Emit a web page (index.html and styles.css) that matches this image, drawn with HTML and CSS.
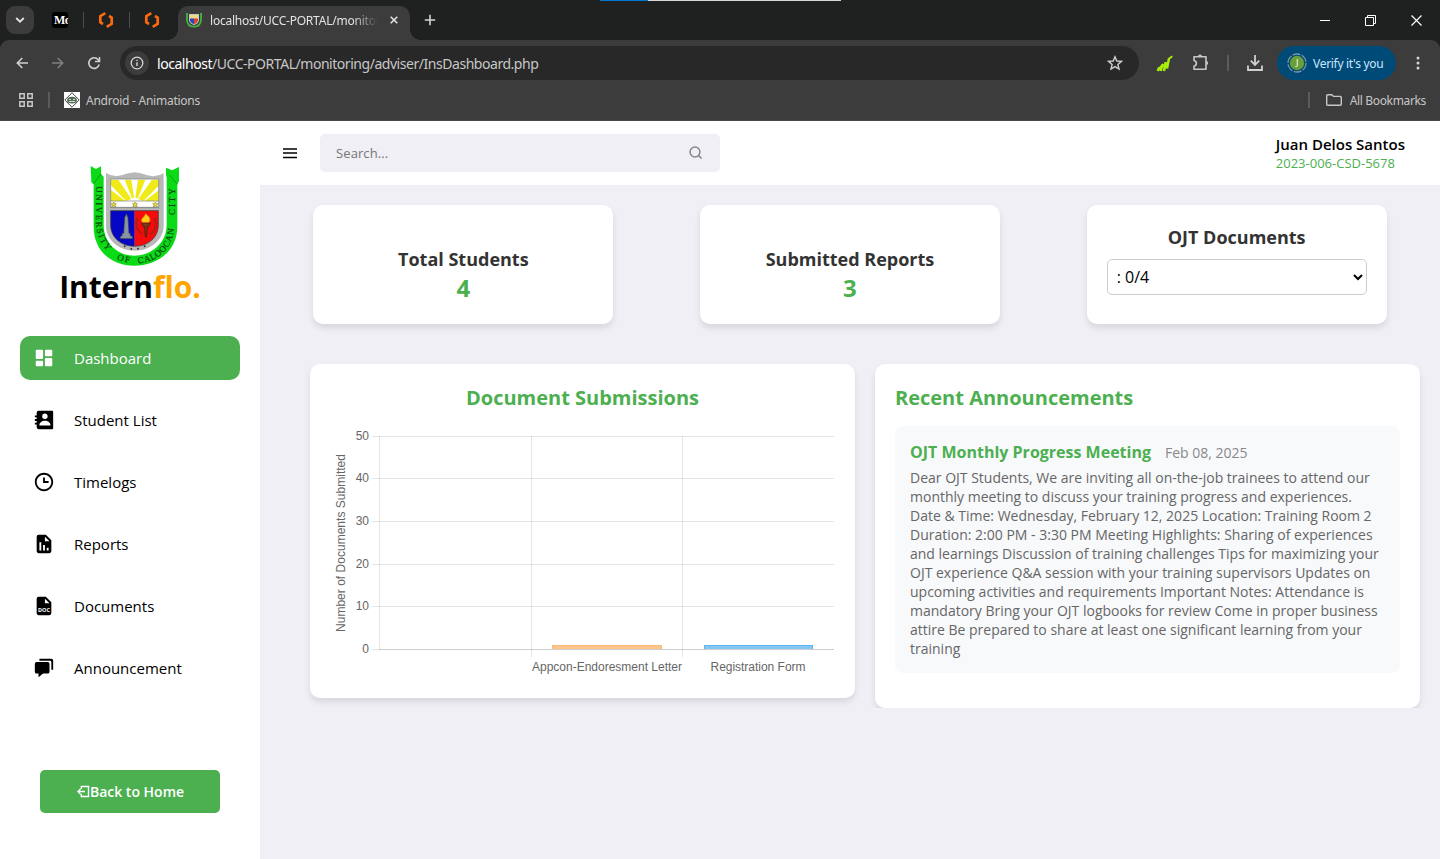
FILE: index.html
```html
<!DOCTYPE html>
<html lang="en">
<head>
<meta charset="utf-8">
<title>Internflo Dashboard</title>
<link rel="stylesheet" href="styles.css">
</head>
<body>
<header class="browser">
  <div class="tabstrip">
    <button class="tab-search"><svg width="10" height="8" viewBox="0 0 10 8"><path d="M1.2 2l3.8 3.7L8.800 2" fill="none" stroke="#e3e3e3" stroke-width="1.8"/></svg></button>
    <span class="fav-m">Mo</span>
    <i class="tab-sep"></i>
    <svg class="fav-hex" width="16" height="18" viewBox="0 0 16 18"><path d="M7.300 2.200L2.300 5.200V11.300L5 13M8.700 15.800L13.700 12.800V6.700L11 5" fill="none" stroke="#fb6a10" stroke-width="2.700"/></svg>
    <i class="tab-sep"></i>
    <svg class="fav-hex" width="16" height="18" viewBox="0 0 16 18"><path d="M7.300 2.200L2.300 5.200V11.300L5 13M8.700 15.800L13.700 12.800V6.700L11 5" fill="none" stroke="#fb6a10" stroke-width="2.700"/></svg>
    <div class="tab">
      <svg width="16" height="16" viewBox="0 0 16 16"><path d="M1 1V8Q1.500 14.500 8 14.700Q14.500 14.500 15 8V1" fill="none" stroke="#45b53c" stroke-width="1.800"/><path d="M3 2H13V8Q12.500 12 8 13Q3.500 12 3 8Z" fill="#c9c9c9"/><path d="M4 3H12V6.500H4Z" fill="#eedb83"/><path d="M4 6.500H8V12Q4.300 11 4 8Z" fill="#2947b8"/><path d="M8 6.500H12V8Q11.700 11 8 12Z" fill="#d74632"/></svg>
      <span class="tab-title">localhost/UCC-PORTAL/monitoring</span>
      <svg class="tab-close" width="8" height="8" viewBox="0 0 8 8"><path d="M.7.7l6.600 6.600M7.300.7L.7 7.300" stroke="#e3e3e3" stroke-width="1.600"/></svg>
    </div>
    <svg class="newtab" width="12" height="12" viewBox="0 0 12 12"><path d="M6 .8V11.200M.8 6H11.200" stroke="#d4d4d4" stroke-width="1.600"/></svg>
    <div class="win">
      <svg width="10" height="11" viewBox="0 0 10 11"><path d="M0 5.500H10" stroke="#fff"/></svg>
      <svg width="11" height="11" viewBox="0 0 11 11" fill="none" stroke="#fff"><path d="M.5 2.500H8.500V10.500H.5zM2.500 2.500V.5H10.500V8.500H8.500"/></svg>
      <svg width="11" height="11" viewBox="0 0 11 11"><path d="M.5.5l10 10M10.500.5l-10 10" stroke="#fff" stroke-width="1.200"/></svg>
    </div>
    <i class="loadbar"></i>
  </div>
  <div class="toolbar">
    <svg class="nav-back" width="12" height="12" viewBox="0 0 12 12"><path d="M12 6H1.500M6.300 1L1.300 6l5 5" fill="none" stroke="#d0d0d0" stroke-width="1.600"/></svg>
    <svg class="nav-fwd" width="12" height="12" viewBox="0 0 12 12"><path d="M0 6H10.500M5.700 1l5 5-5 5" fill="none" stroke="#808080" stroke-width="1.600"/></svg>
    <svg class="nav-reload" width="14" height="14" viewBox="0 0 14 14"><path d="M12.200 8.500A5.300 5.300 0 1 1 11.200 3.700L12.300 5" fill="none" stroke="#d0d0d0" stroke-width="1.600"/><path d="M12.500 1V5.500H8" fill="none" stroke="#d0d0d0" stroke-width="1.600"/></svg>
    <div class="omnibox">
      <span class="info"><svg width="14" height="14" viewBox="0 0 14 14"><circle cx="7" cy="7" r="5.800" fill="none" stroke="#d5d5d5" stroke-width="1.300"/><path d="M7 6.300V10M7 3.700V5.100" stroke="#d5d5d5" stroke-width="1.400"/></svg></span>
      <span class="url"><b>localhost</b>/UCC-PORTAL/monitoring/adviser/InsDashboard.php</span>
      <svg class="star" width="16" height="16" viewBox="0 0 16 16"><path d="M8 1.800L9.800 6l4.700.4-3.600 3.100 1.100 4.500L8 11.600 4 14l1.100-4.500L1.500 6.400 6.200 6z" fill="none" stroke="#d0d0d0" stroke-width="1.400"/></svg>
    </div>
    <svg class="ext-green" width="17" height="17" viewBox="0 0 17 17"><path d="M1.700 16L3.200 12.500M4.700 16L6.500 9.500M8 16L9.800 7M11 13.500L13 3.500" fill="none" stroke="#a7ee0a" stroke-width="2.500"/><path d="M3 13.500L7.500 9M7 12L10.500 7.500M12.500 4L16.300 1.200" stroke="#a7ee0a" stroke-width="1.800"/></svg>
    <svg class="puzzle" width="18" height="18" viewBox="0 0 18 18"><path d="M2 2.800H14V15.200H2V12.200C5.200 11.500 5.200 7.200 2 6.500Z" fill="none" stroke="#c8c8c8" stroke-width="1.600" stroke-linejoin="round"/><path d="M6 2.500a2 1.900 0 0 1 4 0zM14.300 7a1.900 2 0 0 1 0 4z" fill="#c8c8c8"/></svg>
    <i class="tool-sep"></i>
    <svg class="download" width="16" height="16" viewBox="0 0 16 16"><path d="M8 0V9.500M3.800 5.700L8 9.900l4.200-4.200M1 10.500V15H15V10.500" fill="none" stroke="#d0d0d0" stroke-width="1.800"/></svg>
    <button class="verify"><svg width="20" height="20" viewBox="0 0 20 20"><circle cx="10" cy="10" r="9" fill="none" stroke="#7694a9" stroke-width="1.300" stroke-dasharray="8 1.400"/><circle cx="10" cy="10" r="7.200" fill="#689f38"/><text class="avatar-letter" x="10" y="13.200" text-anchor="middle">J</text></svg><span>Verify it's you</span></button>
    <svg class="kebab" width="4" height="14" viewBox="0 0 4 14" fill="#d5d5d5"><circle cx="2" cy="2" r="1.500"/><circle cx="2" cy="7" r="1.500"/><circle cx="2" cy="12" r="1.500"/></svg>
  </div>
  <div class="bookmarks">
    <svg width="14" height="14" viewBox="0 0 14 14" fill="none" stroke="#c7c7c7" stroke-width="1.500"><path d="M.8.8H5.200V5.200H.8zM8.800.8H13.200V5.200H8.800zM.8 8.800H5.200V13.200H.8zM8.800 8.800H13.200V13.200H8.800z"/></svg>
    <i class="bm-sep"></i>
    <svg class="bm-icon" width="16" height="16" viewBox="0 0 16 16"><path d="M0 0H16V16H0z" fill="#fff"/><path d="M8 .8L15.200 8 8 15.200.8 8z" fill="none" stroke="#444"/><path d="M3 9Q3 4.800 8 4.800T13 9Q12 11.500 8 11.500T3 9z" fill="#55685a"/><path d="M5 7.500H7M9 7.500H11M5 9.500H11" stroke="#c5e8cd"/></svg>
    <span class="bm-name">Android - Animations</span>
    <div class="bm-all"><i class="bm-sep"></i><svg width="16" height="12" viewBox="0 0 16 12"><path d="M.7 1.700Q.7.700 1.700.7H5.800L7.500 2.400H14.300Q15.300 2.400 15.300 3.400V10.300Q15.300 11.300 14.300 11.300H1.700Q.7 11.300.7 10.300Z" fill="none" stroke="#c7c7c7" stroke-width="1.400"/></svg><span>All Bookmarks</span></div>
  </div>
</header>

<div class="app">
  <aside class="sidebar">
    <svg class="crest" width="90" height="104" viewBox="120 30 270 312">
      <path d="M122 33L138 42 153 34V56L161 65V210C161 265 203 302 253 302S350 265 350 210V68L348 60V38L366 46 387 36V79L382 88V215C382 288 321 332 253 332S131 288 131 215V88L124 82Z" fill="#0bdb17"/>
      <path d="M131 86L153 56M382 88L358 60" stroke="#087d10" stroke-width="2"/>
      <path d="M168 54Q190 68 214 61Q236 54 254 52Q272 54 292 61Q318 68 341 55V212C341 254 302 287 254 287S168 254 168 212Z" fill="#b8b8b8"/>
      <path d="M182 72H326V158H182Z" fill="#fff"/>
      <path d="M182 74H205L244 132 228 138 182 90ZM224 74H244L252 128 246 130ZM264 74H286L264 130 256 128ZM306 74H326V92L280 138 265 132ZM182 104L226 138H182ZM326 106V138H284Z" fill="#f0ea18"/>
      <path d="M182 138H326M182 157H326M182 72H326V158H182Z" fill="none" stroke="#777" stroke-width="2"/>
      <g fill="#e8dc30" stroke="#77751e" stroke-width="1.500"><path id="crest-star" d="M191 141l3 5h5l-4 4 2 6-6-3-6 3 2-6-4-4h5z"/><use href="#crest-star" x="64"/><use href="#crest-star" x="125"/></g>
      <path d="M182 167H254V274C211 273 182 246 182 211Z" fill="#0507c5"/>
      <path d="M254 167H325V211C325 246 296 273 254 274Z" fill="#f50b0b"/>
      <path d="M182 167H325V211C325 246 296 274 254 274S182 246 182 211Z" fill="none" stroke="#333" stroke-width="2"/>
      <path d="M229 176L224 188 221 235H216V243H211V251H247V243H241V235H237L234 188Z" fill="#8795a3" stroke="#35404a" stroke-width="2"/>
      <path d="M262 190Q252 218 276 237M314 190Q325 218 302 237" fill="none" stroke="#7a2c16" stroke-width="6" stroke-dasharray="4 3"/>
      <path d="M275 204H301L296 215H292L290 246H286L284 215H280Z" fill="#7d3a16" stroke="#391b0c" stroke-width="2"/>
      <path d="M277 202C268 190 286 187 286 176C298 184 304 192 297 202Z" fill="#ffcf16" stroke="#e07a0c" stroke-width="2"/>
      <g fill="#333"><circle cx="224" cy="274" r="3"/><circle cx="244" cy="282" r="3"/><circle cx="264" cy="281" r="3"/><circle cx="284" cy="274" r="3"/></g>
      <path id="arc-a" d="M138 94V205Q140 251 173 290" fill="none"/>
      <path id="arc-b" d="M200 312Q218 322 246 324" fill="none"/>
      <path id="arc-c" d="M264 325C325 321 372 280 373 208" fill="none"/>
      <path id="arc-d" d="M374 180V98" fill="none"/>
      <g class="crest-text">
        <text><textPath href="#arc-a" textLength="202">UNIVERSITY</textPath></text>
        <text><textPath href="#arc-b" textLength="40">OF</textPath></text>
        <text><textPath href="#arc-c" textLength="164">CALOOCAN</textPath></text>
        <text><textPath href="#arc-d" textLength="80">CITY</textPath></text>
      </g>
    </svg>
    <div class="brand">Intern<span>flo.</span></div>
    <nav class="menu">
      <a class="item active"><svg viewBox="0 0 24 24"><path d="M4 13h6a1 1 0 0 0 1-1V4a1 1 0 0 0-1-1H4a1 1 0 0 0-1 1v8a1 1 0 0 0 1 1zm-1 7a1 1 0 0 0 1 1h6a1 1 0 0 0 1-1v-4a1 1 0 0 0-1-1H4a1 1 0 0 0-1 1v4zm10 0a1 1 0 0 0 1 1h6a1 1 0 0 0 1-1v-7a1 1 0 0 0-1-1h-6a1 1 0 0 0-1 1v7zm1-10h6a1 1 0 0 0 1-1V4a1 1 0 0 0-1-1h-6a1 1 0 0 0-1 1v5a1 1 0 0 0 1 1z"/></svg><span>Dashboard</span></a>
      <a class="item"><svg viewBox="0 0 24 24"><path d="M21 2H6a2 2 0 0 0-2 2v3H2v2h2v2H2v2h2v2H2v2h2v3a2 2 0 0 0 2 2h15a1 1 0 0 0 1-1V3a1 1 0 0 0-1-1zm-8 3c1.650 0 3 1.350 3 3a3 3 0 0 1-6 0c0-1.650 1.350-3 3-3zM19 18H7v-.750c0-2.220 2.700-4.500 6-4.500s6 2.280 6 4.500V18z"/></svg><span>Student List</span></a>
      <a class="item"><svg viewBox="0 0 24 24"><path d="M12 2C6.490 2 2 6.490 2 12s4.490 10 10 10 10-4.490 10-10S17.510 2 12 2zm0 18c-4.410 0-8-3.590-8-8s3.590-8 8-8 8 3.590 8 8-3.590 8-8 8z"/><path d="M13 7h-2v6h6v-2h-4z"/></svg><span>Timelogs</span></a>
      <a class="item"><svg viewBox="0 0 24 24"><path fill-rule="evenodd" d="M14 2H6a2 2 0 0 0-2 2v16a2 2 0 0 0 2 2h12a2 2 0 0 0 2-2V8zM9 19H7v-9h2zm4 0h-2v-6h2zm4 0h-2v-3h2zM13 9V4l5 5z"/></svg><span>Reports</span></a>
      <a class="item"><svg viewBox="0 0 24 24"><path fill-rule="evenodd" d="M14 2H6a2 2 0 0 0-2 2v16a2 2 0 0 0 2 2h12a2 2 0 0 0 2-2V8zM13 9V4l5 5z"/><text class="doc-label" x="12" y="18.200" text-anchor="middle" textLength="13" lengthAdjust="spacingAndGlyphs">DOC</text></svg><span>Documents</span></a>
      <a class="item"><svg viewBox="0 0 24 24"><path d="M20 2H7V4H18.500Q20 4 20 5.500V14H22V4a2 2 0 0 0-2-2z"/><path d="M16 5.500H4a2 2 0 0 0-2 2V16a2 2 0 0 0 2 2H6v4l5-4h5a2 2 0 0 0 2-2V7.500a2 2 0 0 0-2-2z"/></svg><span>Announcement</span></a>
    </nav>
    <a class="home"><svg width="13" height="13" viewBox="0 0 13 13"><path d="M4.300 4V1.500H11.500V11.500H4.300V9M1 6.500H8M3.500 3.900L.9 6.500 3.500 9.100" fill="none" stroke="#fff" stroke-width="1.400"/></svg>Back to Home</a>
  </aside>

  <main class="main">
    <div class="topbar">
      <svg class="burger" width="14" height="12" viewBox="0 0 14 12"><path d="M0 2H14M0 6H14M0 10.500H14" stroke="#000" stroke-width="1.600"/></svg>
      <div class="search"><span>Search...</span><svg width="14" height="14" viewBox="0 0 14 14"><path d="M9.500 9.500L12.500 12.500" stroke="#888" stroke-width="1.700"/><circle cx="6" cy="6" r="4.900" fill="none" stroke="#888" stroke-width="1.500"/></svg></div>
      <div class="user"><div class="user-name">Juan Delos Santos</div><div class="user-id">2023-006-CSD-5678</div></div>
    </div>

    <div class="stats">
      <div class="stat"><h3>Total Students</h3><p>4</p></div>
      <div class="stat"><h3>Submitted Reports</h3><p>3</p></div>
      <div class="stat stat-docs"><h3>OJT Documents</h3><select><option>: 0/4</option></select></div>
    </div>

    <div class="panels">
      <section class="panel chart-panel">
        <h2>Document Submissions</h2>
        <svg class="chart" width="505" height="252" viewBox="330 426 505 252">
          <path d="M372 436.500H834M372 478.500H834M372 521.500H834M372 564.500H834M372 606.500H834M372 649.500H834M379.500 436V650M531.500 436V657M682.500 436V657" stroke="#000" stroke-opacity=".1"/>
          <path d="M379 649.500H834" stroke="#000" stroke-opacity=".1"/>
          <path d="M552 645H662V649H552Z" fill="#ffc58c"/><path d="M552.500 649V645.500H661.500V649" fill="none" stroke="#fbb977"/>
          <path d="M704 645H813V649H704Z" fill="#86c7f3"/><path d="M704.500 649V645.500H812.500V649" fill="none" stroke="#5eb5ef"/>
          <g class="tick" text-anchor="end"><text x="369" y="440">50</text><text x="369" y="482">40</text><text x="369" y="525">30</text><text x="369" y="568">20</text><text x="369" y="610">10</text><text x="369" y="653">0</text></g>
          <g class="tick" text-anchor="middle"><text x="607" y="671" textLength="150">Appcon-Endoresment Letter</text><text x="758" y="671" textLength="95">Registration Form</text><text transform="translate(345 543) rotate(-90)" textLength="178">Number of Documents Submitted</text></g>
        </svg>
      </section>
      <section class="panel news-panel">
        <h2>Recent Announcements</h2>
        <article class="news">
          <div class="news-head"><h4>OJT Monthly Progress Meeting</h4><time>Feb 08, 2025</time></div>
          <p>Dear OJT Students, We are inviting all on-the-job trainees to attend our monthly meeting to discuss your training progress and experiences. Date &amp; Time: Wednesday, February 12, 2025 Location: Training Room 2 Duration: 2:00 PM - 3:30 PM Meeting Highlights: Sharing of experiences and learnings Discussion of training challenges Tips for maximizing your OJT experience Q&amp;A session with your training supervisors Updates on upcoming activities and requirements Important Notes: Attendance is mandatory Bring your OJT logbooks for review Come in proper business attire Be prepared to share at least one significant learning from your training</p>
        </article>
      </section>
    </div>
  </main>
</div>
</body>
</html>
```
FILE: styles.css
```css
* { box-sizing: border-box; margin: 0; padding: 0; }
body { font-family: "Open Sans", sans-serif; width: 1440px; height: 859px; overflow: hidden; background: #f0eff6; color: #000; }
svg { flex: none; display: block; }
button { border: 0; font: inherit; }

/* browser frame */
.browser { height: 121px; background: #1f2120; font-family: "Noto Sans", sans-serif; }
.tabstrip { position: relative; height: 40px; display: flex; align-items: center; padding-left: 6px; }
.tab-search { width: 28px; height: 28px; border-radius: 9px; background: #3c3c3c; display: flex; align-items: center; justify-content: center; }
.fav-m { width: 16px; height: 16px; margin: 0 23px 0 18px; border-radius: 3px; background: #000; color: #fff; font: bold 12px/16px "Liberation Serif", serif; letter-spacing: -.5px; padding-left: 2px; overflow: hidden; }
.tab-sep { width: 1px; height: 16px; background: #4b4c4b; margin-right: 14px; margin-left: -8px; }
.fav-hex { margin-right: 23px; }
.fav-hex + .tab { margin-left: -5px; }
.tab { position: relative; align-self: flex-end; height: 34px; width: 232px; border-radius: 10px 10px 0 0; background: #3c3c3c; display: flex; align-items: center; padding: 0 12px 6px 8px; }
.tab::before, .tab::after { content: ""; position: absolute; bottom: 0; width: 10px; height: 10px; }
.tab::before { left: -10px; background: radial-gradient(circle at 0 0, transparent 9.5px, #3c3c3c 10px); }
.tab::after { right: -10px; background: radial-gradient(circle at 100% 0, transparent 9.5px, #3c3c3c 10px); }
.tab-title { width: 168px; margin-left: 8px; white-space: nowrap; overflow: hidden; font-size: 12px; letter-spacing: -.22px; color: #e3e3e3; -webkit-mask-image: linear-gradient(90deg, #000 85%, transparent); mask-image: linear-gradient(90deg, #000 85%, transparent); }
.tab-close { margin-left: 12px; }
.newtab { margin-left: 14px; }
.win { margin-left: auto; display: flex; gap: 35px; padding-right: 18px; }
.loadbar { position: absolute; top: 0; left: 600px; width: 241px; height: 1px; background: linear-gradient(90deg, #0078d4 48px, #d8d8d8 48px); }

.toolbar { height: 46px; background: #3c3c3c; border-radius: 9px 9px 0 0; display: flex; align-items: center; padding-left: 16px; }
.nav-fwd { margin-left: 24px; }
.nav-reload { margin-left: 23px; }
.omnibox { width: 1019px; height: 34px; border-radius: 17px; background: #282828; margin-left: 19px; display: flex; align-items: center; padding: 0 16px 0 5px; }
.info { width: 24px; height: 24px; border-radius: 50%; background: #3c3c3c; display: flex; align-items: center; justify-content: center; }
.url { margin-left: 8px; font-size: 14px; letter-spacing: -.46px; color: #c7c7c7; }
.url b { font-weight: 400; color: #fff; }
.star { margin-left: auto; }
.ext-green { margin-left: 17px; }
.puzzle { margin-left: 19px; }
.tool-sep { width: 2px; height: 16px; background: #5b5b5b; margin-left: 17px; }
.download { margin-left: 18px; }
.verify { width: 119px; height: 34px; border-radius: 17px; background: #004a77; color: #c9e6ff; display: flex; align-items: center; gap: 6px; padding-left: 10px; margin-left: 14px; font-size: 12px; white-space: nowrap; letter-spacing: -.3px; }
.avatar-letter { fill: #fff; font: 9px "Noto Sans", sans-serif; }
.kebab { margin-left: 20px; }
.bookmarks { height: 35px; background: #3c3c3c; border-bottom: 1px solid #474747; display: flex; align-items: center; padding: 0 14px 6px 19px; font-size: 12px; letter-spacing: -.25px; color: #c7c7c7; }
.bm-sep { width: 2px; height: 16px; background: #5b5b5b; margin: 0 14px 0 15px; }
.bm-name { margin-left: 6px; }
.bm-all { margin-left: auto; display: flex; align-items: center; letter-spacing: -.35px; }
.bm-all .bm-sep { margin: 0 16px 0 0; }
.bm-all span { margin-left: 8px; }

/* application */
.app { display: flex; height: 738px; }
.sidebar { width: 260px; background: #fff; display: flex; flex-direction: column; padding: 44px 20px 46px; }
.crest { margin-left: 70px; }
.crest-text { font: 27px "Liberation Serif", serif; fill: #053b08; stroke: #053b08; stroke-width: .5px; }
.brand { font-size: 30px; font-weight: 700; line-height: 36px; text-align: center; }
.brand span { color: #ffa500; }
.menu { display: flex; flex-direction: column; gap: 18px; margin-top: 31px; }
.item { height: 44px; border-radius: 10px; display: flex; align-items: center; padding-left: 13px; font-size: 15px; color: #000; }
.item svg { width: 22px; height: 22px; margin-right: 19px; fill: currentColor; }
.item.active { background: #4caf50; color: #fff; }
.doc-label { font: bold 5.5px "Open Sans", sans-serif; fill: #fff; }
.home { margin: auto 20px 0; height: 43px; border-radius: 5px; background: #4caf50; color: #fff; font-size: 14px; font-weight: 600; display: flex; align-items: center; justify-content: center; padding-left: 1px; }

.main { flex: 1; }
.topbar { height: 64px; background: #fff; display: flex; align-items: center; padding: 0 35px 0 23px; }
.search { width: 400px; height: 38px; margin-left: 23px; border-radius: 5px; background: #f0eff6; display: flex; align-items: center; justify-content: space-between; padding: 0 17px 0 16px; font-size: 13px; letter-spacing: .1px; color: #757575; }
.user { margin-left: auto; }
.user-name { font-size: 15px; font-weight: 600; line-height: 20px; }
.user-id { font-size: 13px; line-height: 18px; color: #4caf50; }

.stats { display: flex; justify-content: space-around; padding: 20px 10px 0; }
.stat { width: 300px; height: 119px; background: #fff; border-radius: 10px; box-shadow: 0 4px 6px rgba(0, 0, 0, .1); padding: 42px 20px 0; text-align: center; }
.stat h3 { font-size: 18px; font-weight: 700; line-height: 25px; color: #333; }
.stat p { font-size: 24px; font-weight: 700; line-height: 31px; color: #4caf50; }
.stat-docs { padding-top: 20px; }
.stat-docs select { width: 100%; height: 36px; margin-top: 9px; padding: 5px; border: 1px solid #ccc; border-radius: 5px; background: #fff; font: 16px "Open Sans", sans-serif; color: #000; }

.panels { display: flex; align-items: flex-start; gap: 20px; padding: 40px 20px 0 50px; }
.panel { flex: 1; background: #fff; border-radius: 10px; box-shadow: 0 4px 6px rgba(0, 0, 0, .1); padding: 20px; }
.panel h2 { font-size: 20px; font-weight: 700; line-height: 27px; color: #4caf50; margin-bottom: 15px; }
.chart-panel { height: 334px; }
.chart-panel h2 { text-align: center; }
.tick { font: 12px "Liberation Sans", Arial, sans-serif; fill: #666; }
.news-panel { height: 344px; clip-path: inset(-6px -6px 0 -6px); }
.news { height: 247px; border-radius: 8px; background: #f8f9fb; padding: 15px; }
.news-head { display: flex; align-items: baseline; gap: 14px; line-height: 22px; margin-bottom: 4px; }
.news-head h4 { font-size: 16px; font-weight: 700; color: #4caf50; }
.news-head time { font-size: 14px; color: #888; }
.news p { font-size: 14px; line-height: 19px; color: #666; }
```
